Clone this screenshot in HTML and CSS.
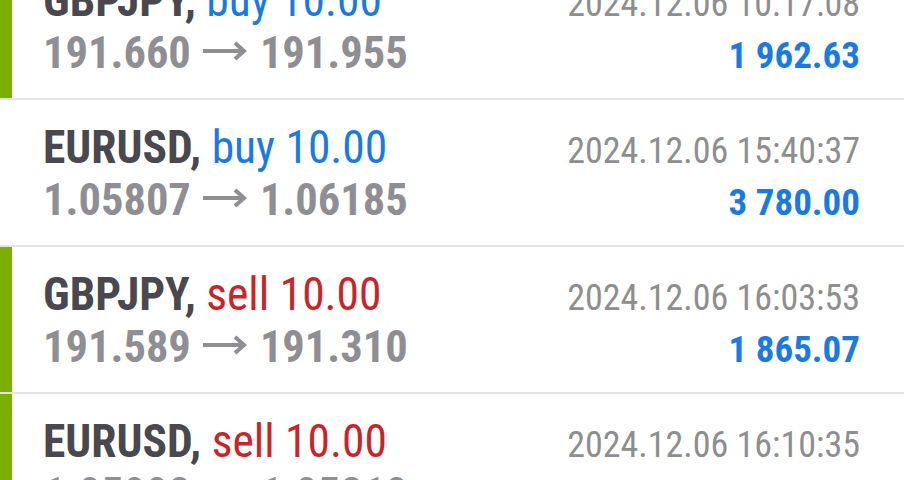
FILE: index.html
```html
<!DOCTYPE html>
<html lang="en">
<head>
  <meta charset="UTF-8">
  <title>History</title>
  <link rel="stylesheet" href="styles.css">
</head>
<body>

  <ul class="deals">
    <!-- closed with profit -->
    <li class="deal">
      <div class="body closed">
        <div class="left">
          <div class="title">GBPJPY, <span class="buy">buy 10.00</span></div>
          <div class="prices">191.660<svg class="arrow" viewBox="0 0 44 20"><path d="M0 10H41M32 2L41 10L32 18"/></svg>191.955</div>
        </div>
        <div class="right">
          <div class="time">2024.12.06 10:17:08</div>
          <div class="profit">1 962.63</div>
        </div>
      </div>
    </li>

    <li class="deal">
      <div class="body">
        <div class="left">
          <div class="title">EURUSD, <span class="buy">buy 10.00</span></div>
          <div class="prices">1.05807<svg class="arrow" viewBox="0 0 44 20"><path d="M0 10H41M32 2L41 10L32 18"/></svg>1.06185</div>
        </div>
        <div class="right">
          <div class="time">2024.12.06 15:40:37</div>
          <div class="profit">3 780.00</div>
        </div>
      </div>
    </li>

    <li class="deal">
      <div class="body closed">
        <div class="left">
          <div class="title">GBPJPY, <span class="sell">sell 10.00</span></div>
          <div class="prices">191.589<svg class="arrow" viewBox="0 0 44 20"><path d="M0 10H41M32 2L41 10L32 18"/></svg>191.310</div>
        </div>
        <div class="right">
          <div class="time">2024.12.06 16:03:53</div>
          <div class="profit">1 865.07</div>
        </div>
      </div>
    </li>

    <li class="deal">
      <div class="body closed">
        <div class="left">
          <div class="title">EURUSD, <span class="sell">sell 10.00</span></div>
          <div class="prices">1.05998<svg class="arrow" viewBox="0 0 44 20"><path d="M0 10H41M32 2L41 10L32 18"/></svg>1.05810</div>
        </div>
        <div class="right">
          <div class="time">2024.12.06 16:10:35</div>
          <div class="profit">1 880.00</div>
        </div>
      </div>
    </li>
  </ul>

</body>
</html>
```

FILE: styles.css
```css
body {
  margin: 0;
  background: #fff;
  font-family: Roboto, "Liberation Sans", sans-serif;
  font-stretch: condensed;
  overflow: hidden;
}

.deals {
  list-style: none;
  margin: -47px 0 0 0;
  padding: 0;
}

.deal {
  border-bottom: 2px solid #e4e4e4;
}

.body {
  height: 145px;
  box-sizing: border-box;
  padding: 22px 44px 0 31px;
  border-left: 12px solid #fff;
  display: flex;
  justify-content: space-between;
  align-items: flex-start;
}

.body.closed {
  border-left-color: #7cb000;
}

.left, .right {
  line-height: 52px;
  white-space: nowrap;
}

.title {
  font-size: 45.5px;
  font-weight: bold;
  color: #48484e;
}

.buy, .sell {
  font-weight: normal;
}

.buy {
  color: #1a7ae0;
}

.sell {
  color: #c8252a;
}

.prices {
  font-size: 44.5px;
  font-weight: bold;
  color: #8e8e93;
}

.arrow {
  width: 44px;
  height: 20px;
  margin: 0 13px 0 12px;
  vertical-align: 7px;
  fill: none;
  stroke: #8e8e93;
  stroke-width: 4;
}

.right {
  padding-top: 3px;
  text-align: right;
}

.time {
  font-size: 36px;
  color: #8e8e8e;
}

.profit {
  font-size: 37px;
  font-weight: bold;
  color: #1a7ae0;
}
```
